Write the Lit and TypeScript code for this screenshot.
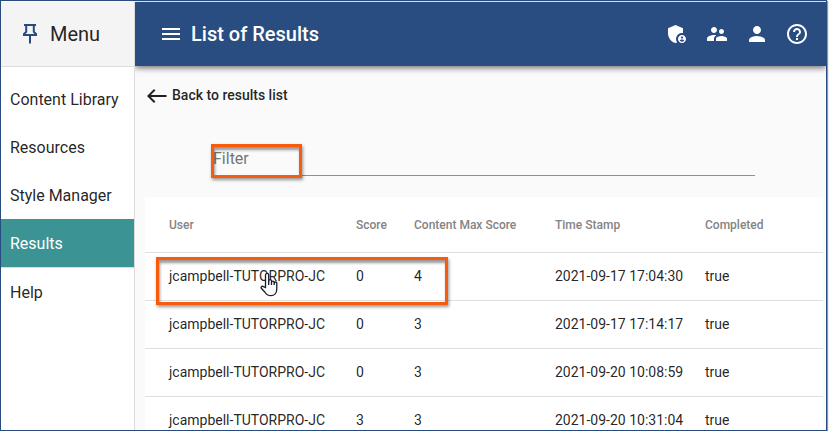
import { LitElement, html, css, svg } from "lit";
import { customElement, state } from "lit/decorators.js";
import { classMap } from "lit/directives/class-map.js";

interface ResultRow {
  user: string;
  score: number;
  max: number;
  time: string;
  completed: boolean;
}

const MENU = ["Content Library", "Resources", "Style Manager", "Results", "Help"];

const ROWS: ResultRow[] = [
  { user: "jcampbell-TUTORPRO-JC", score: 0, max: 4, time: "2021-09-17 17:04:30", completed: true },
  { user: "jcampbell-TUTORPRO-JC", score: 0, max: 3, time: "2021-09-17 17:14:17", completed: true },
  { user: "jcampbell-TUTORPRO-JC", score: 0, max: 3, time: "2021-09-20 10:08:59", completed: true },
  { user: "jcampbell-TUTORPRO-JC", score: 3, max: 3, time: "2021-09-20 10:31:04", completed: true },
];

const ACTIONS = [
  {
    label: "Administration",
    icon: svg`<path d="M17 11c.34 0 .67.04 1 .09V6.27L10.500 3 3 6.270v4.910c0 4.540 3.200 8.790 7.500 9.820.55-.13 1.080-.32 1.600-.55-.69-.98-1.100-2.170-1.100-3.450 0-3.310 2.690-6 6-6z"/><path d="M17 13c-2.210 0-4 1.790-4 4s1.790 4 4 4 4-1.790 4-4-1.790-4-4-4zm0 1.380c.62 0 1.120.51 1.120 1.120s-.51 1.120-1.120 1.120-1.120-.51-1.120-1.120.5-1.120 1.120-1.120zm0 5.370c-.93 0-1.740-.46-2.240-1.170.05-.72 1.510-1.080 2.240-1.080s2.190.36 2.240 1.080c-.5.71-1.310 1.170-2.240 1.170z"/>`,
  },
  {
    label: "Groups",
    icon: svg`<path d="M16.5 12c1.38 0 2.49-1.12 2.49-2.5S17.88 7 16.5 7C15.12 7 14 8.12 14 9.5s1.12 2.5 2.5 2.5zM9 11c1.66 0 2.99-1.34 2.99-3S10.66 5 9 5C7.34 5 6 6.34 6 8s1.34 3 3 3zm7.5 3c-1.83 0-5.5.92-5.5 2.75V19h11v-2.25c0-1.83-3.67-2.75-5.5-2.75zM9 13c-2.33 0-7 1.17-7 3.5V19h7v-2.25c0-.85.33-2.34 2.37-3.47C10.5 13.1 9.66 13 9 13z"/>`,
  },
  {
    label: "Account",
    icon: svg`<path d="M12 12c2.21 0 4-1.79 4-4s-1.79-4-4-4-4 1.79-4 4 1.79 4 4 4zm0 2c-2.67 0-8 1.34-8 4v2h16v-2c0-2.66-5.33-4-8-4z"/>`,
  },
  {
    label: "Help",
    icon: svg`<path d="M11 18h2v-2h-2v2zm1-16C6.48 2 2 6.48 2 12s4.48 10 10 10 10-4.48 10-10S17.52 2 12 2zm0 18c-4.41 0-8-3.59-8-8s3.59-8 8-8 8 3.59 8 8-3.59 8-8 8zm0-14c-2.21 0-4 1.79-4 4h2c0-1.1.9-2 2-2s2 .9 2 2c0 2-3 1.75-3 5h2c0-2.25 3-2.5 3-5 0-2.21-1.79-4-4-4z"/>`,
  },
];

@customElement("app-root")
export class AppRoot extends LitElement {
  @state() private filter = "";

  static styles = css`
    :host {
      display: block;
      font-family: Roboto, "Liberation Sans", sans-serif;
      color: rgba(0, 0, 0, 0.87);
      background: #fff;
    }
    * {
      box-sizing: border-box;
    }
    button {
      border: 0;
      padding: 0;
      background: none;
      font: inherit;
      color: inherit;
      cursor: pointer;
    }
    svg {
      display: block;
      fill: currentColor;
    }
    .frame {
      display: grid;
      grid-template-columns: 134px minmax(0, 1fr);
      height: calc(100vh - 3px);
      margin-right: 3px;
      overflow: hidden;
      border: 1px solid #274b7e;
      box-shadow: 1px 1px 1px #8f98a8;
      background: #fafafa;
      padding-top: 1px;
    }
    .side {
      position: relative;
      z-index: 1;
      background: #fff;
      border-right: 1px solid #dcdcdc;
    }
    .side-head {
      display: flex;
      align-items: center;
      gap: 10px;
      height: 65px;
      padding-left: 19px;
      background: #f4f4f4;
      border-bottom: 1px solid #dcdcdc;
    }
    .side-head h2 {
      margin: 0;
      font-size: 20px;
      font-weight: 400;
    }
    .pin {
      color: #274b7e;
    }
    .nav {
      display: flex;
      flex-direction: column;
      padding-top: 8px;
    }
    .nav a {
      height: 48px;
      padding-left: 9px;
      font-size: 16px;
      line-height: 50px;
      color: rgba(0, 0, 0, 0.87);
      text-decoration: none;
    }
    .nav a.active {
      height: 49px;
      border-bottom: 1px solid #dcdcdc;
      background: #3b9394;
      background-clip: padding-box;
      color: #fff;
    }
    .main {
      min-width: 0;
    }
    .bar {
      display: flex;
      align-items: center;
      height: 64px;
      padding: 0 17px 0 24px;
      background: #294d80;
      color: #fff;
      box-shadow: 0 2px 6px rgba(0, 0, 0, 0.55);
    }
    .bar h1 {
      flex: 1;
      margin: 0 0 0 8px;
      font-size: 20px;
      font-weight: 500;
    }
    .actions {
      display: flex;
      gap: 16px;
    }
    .content {
      padding: 17px 3px 0 10px;
    }
    .back {
      display: flex;
      align-items: center;
      gap: 3px;
      height: 24px;
      font-size: 14px;
      font-weight: 500;
    }
    .field {
      position: relative;
      margin: 37px 68px 0 66px;
      border-bottom: 1px solid #8f8f8f;
    }
    .field input {
      display: block;
      width: 100%;
      height: 31px;
      padding: 0 0 2px 2px;
      border: 0;
      outline: 0;
      background: none;
      font: 16px/24px Roboto, "Liberation Sans", sans-serif;
      color: inherit;
    }
    .field input::placeholder {
      color: #757575;
      opacity: 1;
    }
    .results {
      position: relative;
      margin-top: 21px;
    }
    table {
      width: 100%;
      table-layout: fixed;
      border-collapse: separate;
      border-spacing: 0;
      background: #fff;
    }
    th,
    td {
      height: 48px;
      padding: 0 0 2px;
      border-bottom: 1px solid #dfdfdf;
      text-align: left;
      font-size: 14px;
      font-weight: 400;
      white-space: nowrap;
    }
    th {
      height: 56px;
      padding: 0;
      font-size: 12px;
      font-weight: 500;
      color: #848484;
    }
    th:first-child,
    td:first-child {
      padding-left: 24px;
    }
    .c-user {
      width: 211px;
    }
    .c-score {
      width: 58px;
    }
    .c-max {
      width: 141px;
    }
    .c-time {
      width: 150px;
    }
    .mark {
      position: absolute;
      border: 3px solid #f95b0d;
      box-shadow: 1px 2px 3px rgba(0, 0, 0, 0.4), inset 1px 3px 3px rgba(0, 0, 0, 0.4);
      pointer-events: none;
    }
    .mark-filter {
      left: 0;
      top: 0;
      width: 91px;
      height: 34px;
    }
    .mark-row {
      left: 11px;
      top: 60px;
      width: 292px;
      height: 48px;
    }
    .pointer {
      position: absolute;
      left: 115px;
      top: 75px;
      pointer-events: none;
    }
  `;

  private onFilter(e: Event) {
    this.filter = (e.target as HTMLInputElement).value;
  }

  render() {
    const rows = ROWS.filter((r) => r.user.toLowerCase().includes(this.filter.toLowerCase()));
    return html`
      <div class="frame">
        <aside class="side">
          <div class="side-head">
            <button class="pin" aria-label="Pin menu">
              <svg width="20" height="24" viewBox="0 0 20 24">
                <path
                  d="M4 2h12v2h-1.200v5.500l2.200 2V14h-6v7.500H9V14H3v-2.500l2.200-2V4H4zM7.200 4v6.200L5.500 12h9l-1.700-1.800V4z"
                  fill-rule="evenodd"
                />
              </svg>
            </button>
            <h2>Menu</h2>
          </div>
          <nav class="nav">
            ${MENU.map(
              (m) => html`<a href="#" class=${classMap({ active: m === "Results" })}>${m}</a>`
            )}
          </nav>
        </aside>
        <main class="main">
          <header class="bar">
            <button aria-label="Toggle menu">
              <svg width="24" height="24" viewBox="0 0 24 24">
                <path d="M3 18h18v-2H3v2zm0-5h18v-2H3v2zm0-7v2h18V6H3z" />
              </svg>
            </button>
            <h1>List of Results</h1>
            <div class="actions">
              ${ACTIONS.map(
                (a) => html`<button aria-label=${a.label}>
                  <svg width="24" height="24" viewBox="0 0 24 24">${a.icon}</svg>
                </button>`
              )}
            </div>
          </header>
          <div class="content">
            <button class="back">
              <svg width="24" height="24" viewBox="0 0 24 24">
                <path d="M21.500 12H5.800l4.600-4.600L9 6l-7 7 7 7 1.400-1.400L5.800 14h15.700z" />
              </svg>
              Back to results list
            </button>
            <div class="field">
              <input
                type="text"
                placeholder="Filter"
                aria-label="Filter"
                .value=${this.filter}
                @input=${this.onFilter}
              />
              <div class="mark mark-filter"></div>
            </div>
            <div class="results">
              <table>
                <thead>
                  <tr>
                    <th class="c-user">User</th>
                    <th class="c-score">Score</th>
                    <th class="c-max">Content Max Score</th>
                    <th class="c-time">Time Stamp</th>
                    <th>Completed</th>
                  </tr>
                </thead>
                <tbody>
                  ${rows.map(
                    (r) => html`<tr>
                      <td>${r.user}</td>
                      <td>${r.score}</td>
                      <td>${r.max}</td>
                      <td>${r.time}</td>
                      <td>${r.completed}</td>
                    </tr>`
                  )}
                </tbody>
              </table>
              <div class="mark mark-row"></div>
              <svg class="pointer" width="18" height="25" viewBox="0 0 18 25">
                <path
                  d="M5.5 15.5V3a1.6 1.6 0 0 1 3.2 0v6.5V9a1.4 1.4 0 0 1 2.8 0v1.2a1.4 1.4 0 0 1 2.7 0v1a1.3 1.3 0 0 1 2.6.2V17c0 4-2.4 6.7-6 6.7-3 0-4.6-1.3-6-3.7L1.3 16.3c-.8-1.5.9-2.7 2.2-1.6z"
                  fill="#fff"
                  stroke="#1b1b2b"
                  stroke-width="1.3"
                />
                <path d="M8.7 9v4M11.5 10v3M14.2 10.5V13" fill="none" stroke="#1b1b2b" stroke-width="1.3" />
              </svg>
            </div>
          </div>
        </main>
      </div>
    `;
  }
}
